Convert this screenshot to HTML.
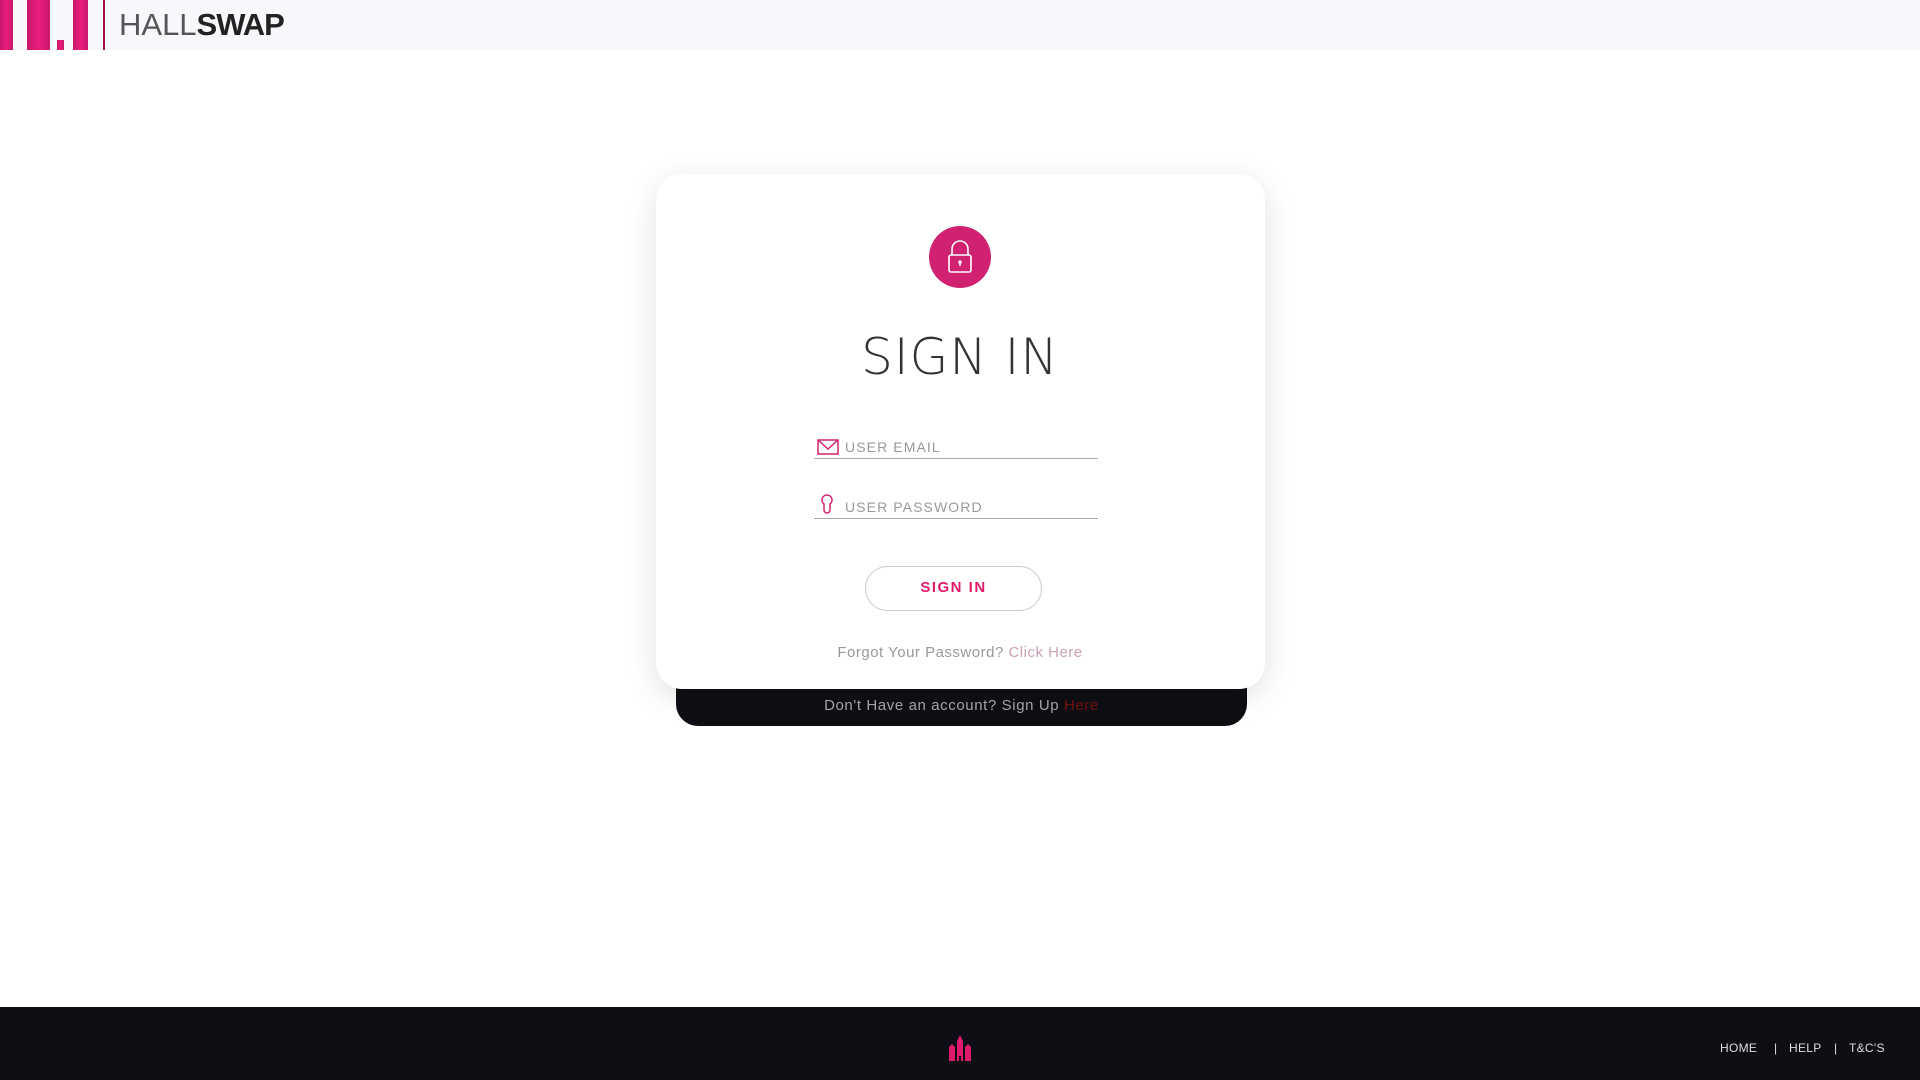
<!DOCTYPE html>
<html><head><meta charset="utf-8"><style>
*{margin:0;padding:0;box-sizing:border-box}
body{width:1920px;height:1080px;background:#fff;font-family:"Liberation Sans",sans-serif;position:relative;overflow:hidden}
.hdr{position:absolute;left:0;top:0;width:1920px;height:50px;background:#f7f8fc}
.bar{position:absolute;background:linear-gradient(90deg,#c8176a,#e91e7a,#c8176a)}
.logo{position:absolute;left:119px;top:8px;font-size:31px;color:#222;line-height:34px}
.logo .l{font-weight:normal;color:#555;letter-spacing:0px}
.logo .b{font-weight:bold;letter-spacing:-1px}
.dark{position:absolute;left:676px;top:660px;width:571px;height:66px;background:#0e0f14;border-radius:0 0 22px 22px;color:#aaa;font-size:15px;letter-spacing:0.6px;text-align:center;padding-top:37px}
.card{position:absolute;left:656px;top:174px;width:609px;height:515px;background:#fff;border-radius:26px;box-shadow:0 8px 30px rgba(0,0,0,0.12)}
.lock{position:absolute;left:929px;top:226px;width:62px;height:62px;border-radius:50%;background:#d02270}
.title{position:absolute;left:0;width:1920px;top:328px;text-align:center;font-size:50px;font-family:"DejaVu Sans","Liberation Sans",sans-serif;font-weight:200;color:#333;letter-spacing:1px}
.field{position:absolute;left:814px;width:284px;border-bottom:1.5px solid #aaa;height:22px}
.field span{position:absolute;left:31px;top:2px;font-size:14px;color:#999;letter-spacing:1.1px}
.btn{position:absolute;left:865px;top:566px;width:177px;height:45px;border:1.5px solid #ccc;border-radius:23px;text-align:center;line-height:42px;color:#e01a6c;font-weight:bold;font-size:15px;letter-spacing:1.5px}
.forgot{position:absolute;left:0;width:1920px;top:644px;text-align:center;font-size:15px;color:#999;letter-spacing:0.5px}
.foot{position:absolute;left:0;top:1007px;width:1920px;height:73px;background:#0e0f14}
.nav{position:absolute;top:1041px;font-size:12px;color:#ddd;letter-spacing:0.3px}
</style></head><body>
<div class="hdr">
<div class="bar" style="left:0;top:0;width:13px;height:50px"></div>
<div class="bar" style="left:27px;top:0;width:23px;height:50px"></div>
<div class="bar" style="left:57px;top:40px;width:7px;height:10px"></div>
<div class="bar" style="left:73px;top:0;width:15px;height:50px"></div>
<div style="position:absolute;left:103px;top:0;width:2px;height:50px;background:#a01050"></div>
<div class="logo"><span class="l">HALL</span><span class="b">SWAP</span></div>
</div>
<div class="dark">Don't Have an account? Sign Up <span style="color:#7a1010">Here</span></div>
<div class="card"></div>
<div class="lock"><svg width="62" height="62" viewBox="0 0 62 62"><path d="M23 29v-6a8 8 0 0 1 16 0v6" fill="none" stroke="#fff" stroke-width="1.6"/><rect x="20" y="29" width="22" height="17" rx="2" fill="none" stroke="#fff" stroke-width="1.6"/><circle cx="31" cy="36" r="1.8" fill="#fff"/><rect x="30.2" y="36" width="1.6" height="4" fill="#fff"/></svg></div>
<div class="title">SIGN IN</div>
<div class="field" style="top:437px"><svg style="position:absolute;left:3px;top:2px" width="22" height="16"><path d="M1 1h20v14H1z M1 1l10 9 10-9" fill="none" stroke="#d02270" stroke-width="1.5"/></svg><span>USER EMAIL</span></div>
<div class="field" style="top:497px"><svg style="position:absolute;left:6px;top:-3px" width="14" height="20"><path d="M7 1a5 5 0 0 0-3 9v6a3 3 0 0 0 6 0v-6a5 5 0 0 0-3-9z" fill="none" stroke="#d02270" stroke-width="1.5"/></svg><span>USER PASSWORD</span></div>
<div class="btn">SIGN IN</div>
<div class="forgot">Forgot Your Password? <span style="color:#c9a0b4">Click Here</span></div>
<div class="foot"></div>
<svg style="position:absolute;left:948px;top:1035px" width="24" height="26" viewBox="0 0 24 26"><path d="M1 26V12l3-3 3 3v14zM9 26V6l3-6 3 6v20zM17 26V12l3-3 3 3v14z" fill="#e01a6c"/><rect x="11" y="21" width="2" height="5" fill="#0e0f14"/></svg>
<div class="nav" style="left:1720px">HOME</div>
<div class="nav" style="left:1774px">|</div>
<div class="nav" style="left:1789px">HELP</div>
<div class="nav" style="left:1834px">|</div>
<div class="nav" style="left:1849px">T&amp;C'S</div>
</body></html>
